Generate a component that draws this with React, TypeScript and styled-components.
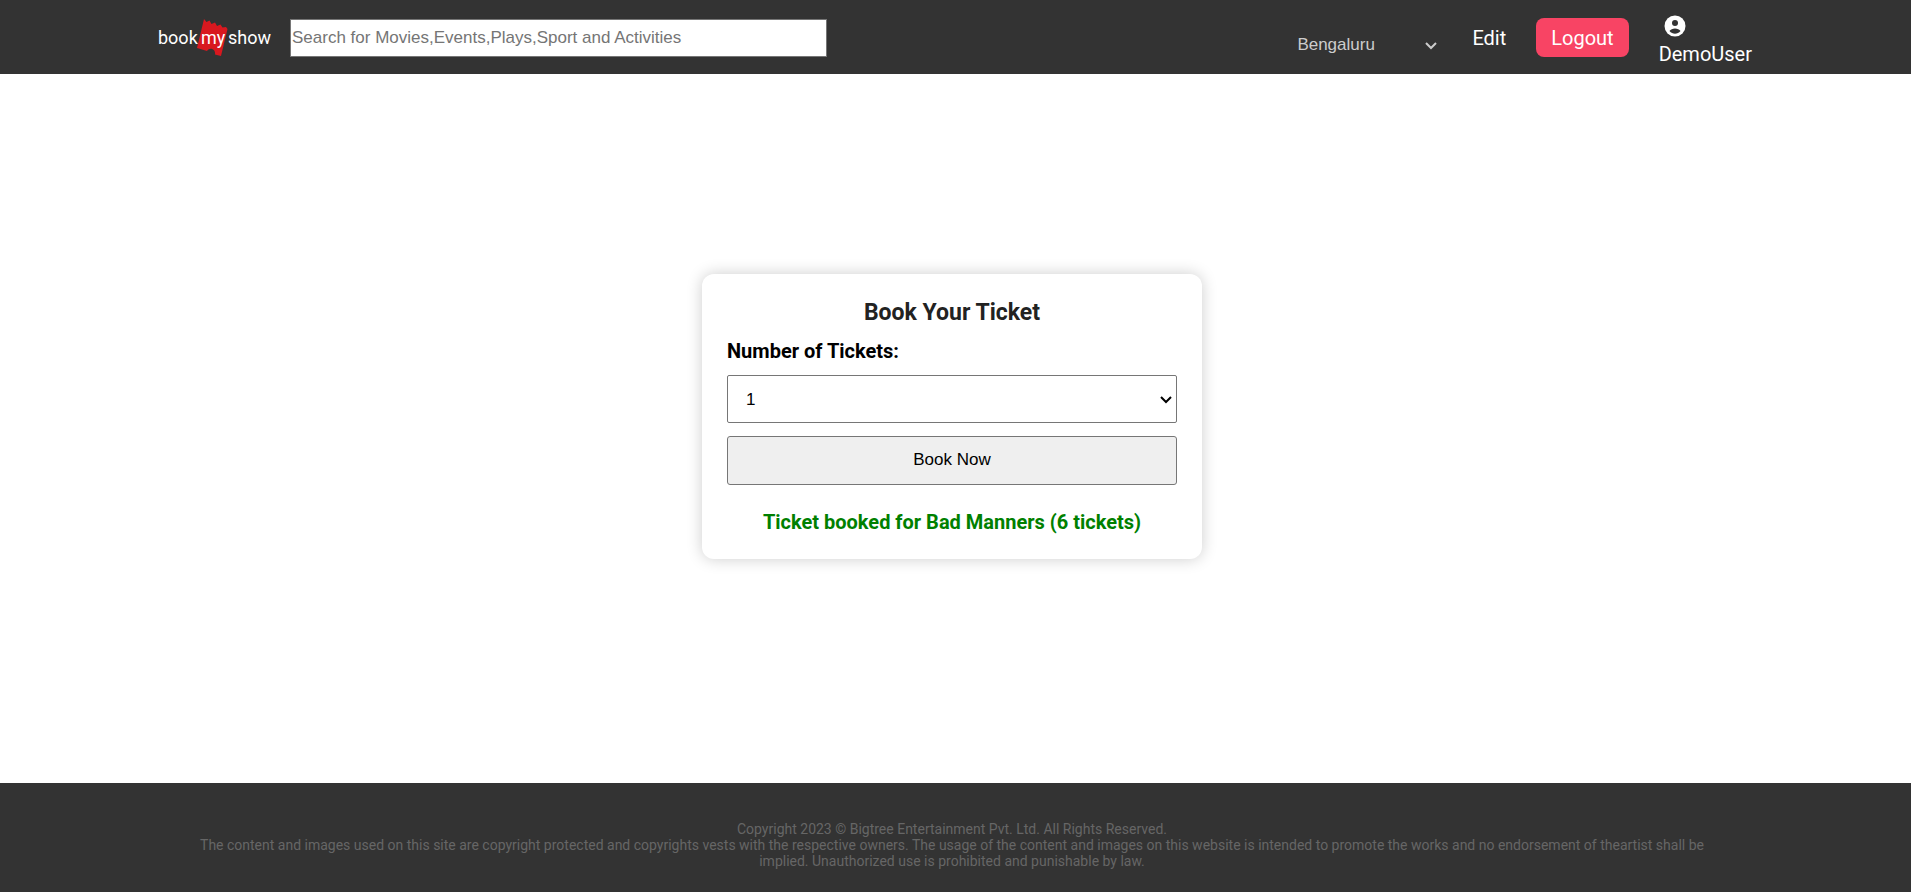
import React from "react";
import styled, { createGlobalStyle } from "styled-components";

const GlobalStyle = createGlobalStyle`
  * { box-sizing: border-box; }
  body { margin: 0; background: #fff; font-family: Roboto, sans-serif; }
`;

const Page = styled.div`
  min-height: 100vh;
  display: flex;
  flex-direction: column;
`;

const Header = styled.header`
  background: #333;
  min-height: 74px;
  padding: 1px 159px 0 158px;
  display: flex;
  align-items: center;
  justify-content: space-between;
`;

const Group = styled.div<{ $gap: number }>`
  display: flex;
  align-items: center;
  gap: ${(p) => p.$gap}px;
`;

const LogoLink = styled.a`
  display: block;
  svg {
    display: block;
    overflow: visible;
  }
  text {
    fill: #fff;
    font: 18px Roboto, sans-serif;
  }
`;

const SearchBox = styled.input`
  width: 537px;
  height: 38px;
  padding: 1px;
  border: 1px solid #767676;
  border-radius: 0;
  background: #fff;
  font: 17px "Liberation Sans", Arial, sans-serif;
  &::placeholder { color: #757575; }
`;

const SelectFrame = styled.span`
  display: grid;
  align-items: center;
  > * { grid-area: 1 / 1; }
  svg {
    justify-self: end;
    margin: 2px 5px 0 0;
    pointer-events: none;
  }
`;

const CityFrame = styled(SelectFrame)`
  width: 145px;
  margin-top: 14px;
  color: #ccc;
`;

const CitySelect = styled.select`
  appearance: none;
  width: 100%;
  padding: 0;
  border: 0;
  background: #333;
  color: #ccc;
  font: 17px/20px "Liberation Sans", Arial, sans-serif;
`;

const NavLink = styled.a`
  color: #fff;
  font-size: 20px;
  line-height: 24px;
  text-decoration: none;
`;

const LogoutButton = styled.button`
  height: 39px;
  padding: 0 15px;
  border: 0;
  border-radius: 8px;
  background: #f84464;
  color: #fff;
  font: 20px/24px Roboto, sans-serif;
`;

const User = styled.div`
  color: #fff;
  font-size: 20px;
  line-height: 24px;
  padding-top: 6px;
  svg { display: block; margin: 0 0 5px 5px; }
`;

const Main = styled.main`
  flex: 1;
  display: flex;
  align-items: center;
  justify-content: center;
  padding: 0 7px 24px 0;
`;

const Card = styled.form`
  width: 500px;
  padding: 25px;
  border-radius: 12px;
  background: #fff;
  box-shadow: 0 0 16px rgba(0, 0, 0, 0.2);
  display: flex;
  flex-direction: column;
`;

const Title = styled.h2`
  margin: 0 0 12px;
  color: #222;
  font-size: 23px;
  line-height: 28px;
  font-weight: 700;
  text-align: center;
`;

const Label = styled.label`
  margin-bottom: 12px;
  font-size: 20px;
  line-height: 24px;
  font-weight: 700;
`;

const TicketFrame = styled(SelectFrame)`
  margin-bottom: 13px;
`;

const TicketSelect = styled.select`
  appearance: none;
  width: 100%;
  height: 48px;
  padding: 0 0 0 18px;
  border: 1px solid #767676;
  border-radius: 2px;
  background: #fff;
  color: #000;
  font: 17px "Liberation Sans", Arial, sans-serif;
`;

const BookButton = styled.button`
  height: 49px;
  padding: 0 0 2px;
  border: 1px solid #767676;
  border-radius: 3px;
  background: #efefef;
  color: #000;
  font: 17px "Liberation Sans", Arial, sans-serif;
`;

const Message = styled.p`
  margin: 25px 0 0;
  color: green;
  font-size: 20px;
  line-height: 24px;
  font-weight: 700;
  text-align: center;
`;

const Footer = styled.footer`
  min-height: 109px;
  padding: 38px 197px 15px 190px;
  background: #333;
  color: #666;
  font-size: 14px;
  line-height: 16px;
  text-align: center;
  p { margin: 0; }
`;

const Logo = () => (
  <svg width="112" height="38" viewBox="0 0 112 38" role="img" aria-label="book my show">
    <path
      d="M46 0l2.500 3 3-1.500 2 3.500 3.500-1.500 2 3.500 3.500-1.500 2 3 3.500-.5 1.500 2-6.500 27-6-1.500c1-5-5-8-8-3.500l-10-3z"
      fill="#d8181f"
    />
    <text x="0" y="25">book</text>
    <text x="43" y="25">my</text>
    <text x="70" y="25">show</text>
  </svg>
);

const Chevron = () => (
  <svg width="12" height="8" viewBox="0 0 12 8" fill="none" stroke="currentColor" strokeWidth="2" aria-hidden="true">
    <path d="M1 1l5 5 5-5" />
  </svg>
);

const UserIcon = () => (
  <svg width="22" height="22" viewBox="0 0 22 22" aria-hidden="true">
    <circle cx="11" cy="11" r="10.500" fill="#fff" />
    <circle cx="11" cy="8" r="3" fill="#333" />
    <path d="M5.500 16c2-3.500 9-3.500 11 0-3 3.500-8 3.500-11 0z" fill="#333" />
  </svg>
);

export default function App() {
  return (
    <Page>
      <GlobalStyle />
      <Header>
        <Group $gap={20}>
          <LogoLink href="#"><Logo /></LogoLink>
          <SearchBox
            type="search"
            aria-label="Search"
            placeholder="Search for Movies,Events,Plays,Sport and Activities"
          />
        </Group>
        <Group $gap={30}>
          <CityFrame>
            <CitySelect aria-label="City" defaultValue="Bengaluru">
              <option>Bengaluru</option>
              <option>Mumbai</option>
              <option>Chennai</option>
            </CitySelect>
            <Chevron />
          </CityFrame>
          <NavLink href="#">Edit</NavLink>
          <LogoutButton type="button">Logout</LogoutButton>
          <User>
            <UserIcon />
            DemoUser
          </User>
        </Group>
      </Header>
      <Main>
        <Card onSubmit={(e) => e.preventDefault()}>
          <Title>Book Your Ticket</Title>
          <Label htmlFor="tickets">Number of Tickets:</Label>
          <TicketFrame>
            <TicketSelect id="tickets" defaultValue="1">
              {[1, 2, 3, 4, 5, 6].map((n) => (
                <option key={n}>{n}</option>
              ))}
            </TicketSelect>
            <Chevron />
          </TicketFrame>
          <BookButton type="submit">Book Now</BookButton>
          <Message>Ticket booked for Bad Manners (6 tickets)</Message>
        </Card>
      </Main>
      <Footer>
        <p>Copyright 2023 © Bigtree Entertainment Pvt. Ltd. All Rights Reserved.</p>
        <p>
          The content and images used on this site are copyright protected and copyrights vests with
          the respective owners. The usage of the content and images on this website is intended to
          promote the works and no endorsement of theartist shall be implied. Unauthorized use is
          prohibited and punishable by law.
        </p>
      </Footer>
    </Page>
  );
}
